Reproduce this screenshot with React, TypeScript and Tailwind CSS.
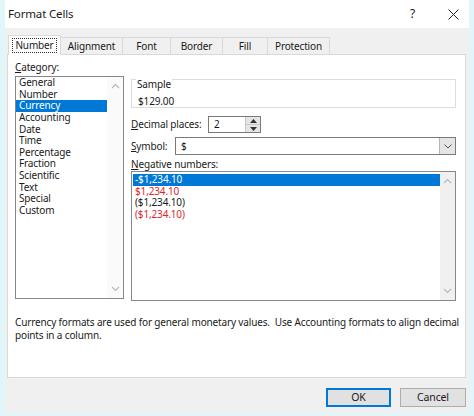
import React from 'react';

const font = { fontFamily: '"Noto Sans", "Liberation Sans", sans-serif' };

function ScrollArrow(props: { dir: 'up' | 'down' }) {
  return (
    <svg width="9" height="6" viewBox="0 0 9 6" className="block">
      {props.dir === 'up' ? (
        <path d="M1 5 L4.5 1.5 L8 5" fill="none" stroke="#b8b8b8" strokeWidth="1.2" />
      ) : (
        <path d="M1 1 L4.5 4.5 L8 1" fill="none" stroke="#b8b8b8" strokeWidth="1.2" />
      )}
    </svg>
  );
}

function Tab(props: { label: string; active?: boolean; width: string }) {
  if (props.active) {
    return (
      <div
        className={`${props.width} relative z-10 -mb-px flex h-[20px] items-center justify-center border border-b-0 border-[#d9d9d9] bg-white`}
      >
        <span className="border border-dotted border-[#333] px-[2px] leading-[13px]">{props.label}</span>
      </div>
    );
  }
  return (
    <div
      className={`${props.width} mt-[2px] flex h-[17px] items-center justify-center border border-b-0 border-l-0 border-[#d9d9d9] bg-[#f0f0f0]`}
    >
      {props.label}
    </div>
  );
}

const categories = [
  'General',
  'Number',
  'Currency',
  'Accounting',
  'Date',
  'Time',
  'Percentage',
  'Fraction',
  'Scientific',
  'Text',
  'Special',
  'Custom',
];

const negatives = [
  { text: '-$1,234.10', red: false },
  { text: '$1,234.10', red: true },
  { text: '($1,234.10)', red: false },
  { text: '($1,234.10)', red: true },
];

export default function App() {
  return (
    <div
      style={font}
      className="h-[416px] w-[474px] bg-[#e0f6f9] px-[5px] pb-[3px] text-[10px] tracking-[-0.15px] text-[#1a1a1a]"
    >
      <div className="flex h-full flex-col bg-[#f0f0f0]">
        {/* title bar */}
        <div className="flex h-[28px] items-center bg-white pl-[3px] pr-[10px]">
          <span className="text-[11.5px]">Format Cells</span>
          <span className="ml-auto text-[12px]">?</span>
          <svg width="11" height="11" viewBox="0 0 11 11" className="ml-[33px]">
            <path d="M0.5 0.5 L10.5 10.5 M10.5 0.5 L0.5 10.5" stroke="#222" strokeWidth="1" />
          </svg>
        </div>

        <div className="flex flex-1 flex-col px-[2px] pt-[7px]">
          {/* tabs */}
          <div className="flex items-start pl-px">
            <Tab label="Number" active width="w-[53px]" />
            <Tab label="Alignment" width="w-[62px]" />
            <Tab label="Font" width="w-[48px]" />
            <Tab label="Border" width="w-[52px]" />
            <Tab label="Fill" width="w-[45px]" />
            <Tab label="Protection" width="w-[62px]" />
          </div>

          {/* panel */}
          <div className="flex h-[324px] w-[459px] flex-col border border-[#d9d9d9] bg-white pl-[7px]">
            <div className="flex pt-[6px]">
              {/* category column */}
              <div className="flex w-[109px] flex-col">
                <div className="h-[15px] leading-[13px]">
                  <span className="underline">C</span>ategory:
                </div>
                <div className="flex h-[223px] border border-[#828790]">
                  <div className="flex flex-1 flex-col">
                    {categories.map((c) => (
                      <div
                        key={c}
                        className={`h-[11.64px] pl-[3px] leading-[11.64px] ${c === 'Currency' ? 'bg-[#0078d7] text-white' : ''}`}
                      >
                        {c}
                      </div>
                    ))}
                  </div>
                  <div className="flex w-[16px] flex-col items-center justify-between bg-[#fafafa] py-[6px]">
                    <ScrollArrow dir="up" />
                    <ScrollArrow dir="down" />
                  </div>
                </div>
              </div>

              {/* right column */}
              <div className="ml-[7px] flex w-[325px] flex-col">
                <div className="relative mt-[18px] h-[29px] border border-[#dcdcdc]">
                  <span className="absolute left-[4px] top-[-2px] bg-white px-[1px] leading-[12px]">Sample</span>
                  <div className="pl-[6px] pt-[15px] leading-[12px]">$129.00</div>
                </div>

                <div className="mt-[8px] flex h-[17px] items-center">
                  <span className="w-[77px] whitespace-nowrap">
                    <span className="underline">D</span>ecimal places:
                  </span>
                  <div className="flex h-[17px] w-[53px] border border-[#7a7a7a]">
                    <span className="flex-1 pl-[5px] leading-[15px]">2</span>
                    <div className="flex w-[15px] flex-col border-l border-[#c8c8c8] bg-[#e5e5e5]">
                      <div className="flex flex-1 items-center justify-center border-b border-[#c8c8c8]">
                        <svg width="7" height="4" viewBox="0 0 7 4">
                          <path d="M0 4 L3.5 0 L7 4 Z" fill="#333" />
                        </svg>
                      </div>
                      <div className="flex flex-1 items-center justify-center">
                        <svg width="7" height="4" viewBox="0 0 7 4">
                          <path d="M0 0 L3.5 4 L7 0 Z" fill="#333" />
                        </svg>
                      </div>
                    </div>
                  </div>
                </div>

                <div className="mt-[4px] flex h-[18px] items-center">
                  <span className="w-[44px] whitespace-nowrap">
                    <span className="underline">S</span>ymbol:
                  </span>
                  <div className="flex h-[18px] flex-1 border border-[#7a7a7a]">
                    <span className="flex-1 pl-[5px] leading-[16px]">$</span>
                    <div className="flex w-[16px] items-center justify-center border-l border-[#b5b5b5] bg-[#e5e5e5]">
                      <svg width="8" height="5" viewBox="0 0 8 5">
                        <path d="M0.5 0.5 L4 4 L7.5 0.5" fill="none" stroke="#555" strokeWidth="1" />
                      </svg>
                    </div>
                  </div>
                </div>

                <div className="mt-[3px] h-[13px] leading-[13px]">
                  <span className="underline">N</span>egative numbers:
                </div>
                <div className="flex h-[130px] border border-[#828790]">
                  <div className="flex flex-1 flex-col pl-px pt-[2px]">
                    {negatives.map((n, i) => (
                      <div
                        key={i}
                        className={`h-[11.67px] pl-[2px] leading-[11.67px] ${
                          i === 0 ? 'bg-[#0078d7] text-white' : n.red ? 'text-[#e0262b]' : ''
                        }`}
                      >
                        {n.text}
                      </div>
                    ))}
                  </div>
                  <div className="flex w-[15px] flex-col items-center justify-between bg-[#f0f0f0] py-[6px]">
                    <ScrollArrow dir="up" />
                    <ScrollArrow dir="down" />
                  </div>
                </div>
              </div>
            </div>

            <div className="mt-[15px] w-[448px] leading-[12.5px]">
              Currency formats are used for general monetary values.&nbsp; Use Accounting formats to align decimal
              points in a column.
            </div>
          </div>

          {/* buttons */}
          <div className="mt-[10px] flex justify-end gap-[9px] pr-px">
            <button className="h-[19px] w-[65px] border-2 border-[#0078d7] bg-[#e1e1e1] text-[10.5px] leading-none">
              OK
            </button>
            <button className="h-[19px] w-[66px] border border-[#adadad] bg-[#e1e1e1] text-[10.5px] leading-none">
              Cancel
            </button>
          </div>
        </div>
      </div>
    </div>
  );
}
